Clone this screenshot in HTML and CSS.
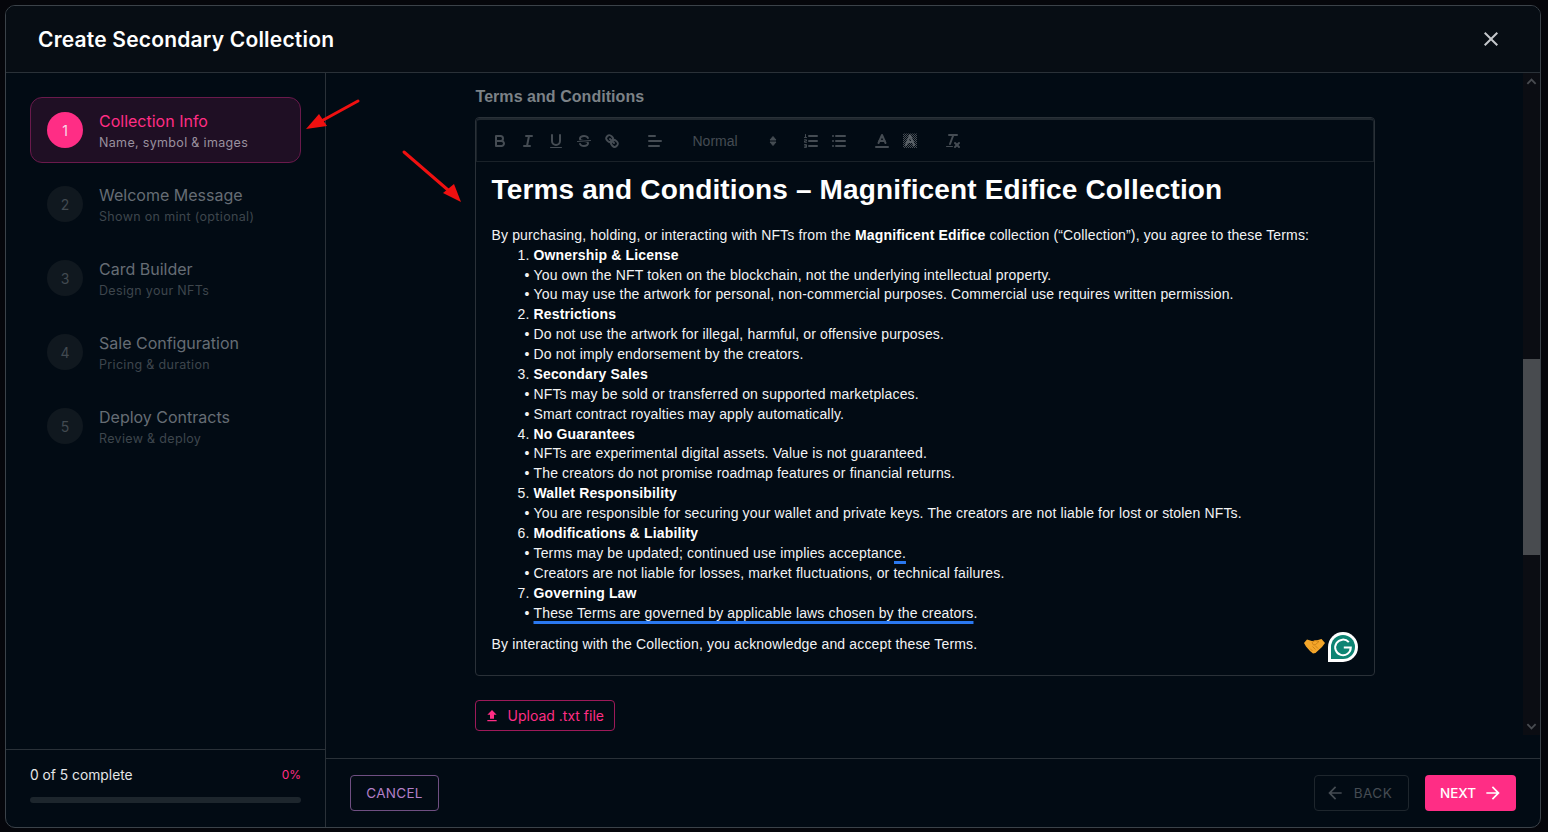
FILE: index.html
```html
<!DOCTYPE html>
<html lang="en">
<head>
<meta charset="utf-8">
<title>Create Secondary Collection</title>
<link rel="stylesheet" href="styles.css">
</head>
<body>
<div class="dialog">
  <header class="dialog-head">
    <h1 class="dialog-title">Create Secondary Collection</h1>
    <svg class="close" viewBox="0 0 24 24"><path d="M19 6.41 17.59 5 12 10.59 6.41 5 5 6.41 10.59 12 5 17.59 6.41 19 12 13.41 17.59 19 19 17.59 13.41 12z"/></svg>
  </header>
  <div class="dialog-body">
    <aside class="sidebar">
      <ol class="steps">
        <li class="step step-active"><span class="step-num">1</span><div class="step-text"><div class="step-title">Collection Info</div><div class="step-sub">Name, symbol &amp; images</div></div></li>
        <li class="step"><span class="step-num">2</span><div class="step-text"><div class="step-title">Welcome Message</div><div class="step-sub">Shown on mint (optional)</div></div></li>
        <li class="step"><span class="step-num">3</span><div class="step-text"><div class="step-title">Card Builder</div><div class="step-sub">Design your NFTs</div></div></li>
        <li class="step"><span class="step-num">4</span><div class="step-text"><div class="step-title">Sale Configuration</div><div class="step-sub">Pricing &amp; duration</div></div></li>
        <li class="step"><span class="step-num">5</span><div class="step-text"><div class="step-title">Deploy Contracts</div><div class="step-sub">Review &amp; deploy</div></div></li>
      </ol>
      <div class="progress">
        <div class="progress-row"><span>0 of 5 complete</span><span class="progress-pct">0%</span></div>
        <div class="progress-bar"></div>
      </div>
    </aside>
    <main class="main">
      <div class="scroll-row">
        <div class="content">
          <div class="content-inner">
            <div class="field-label">Terms and Conditions</div>
            <div class="editor">
              <div class="toolbar">
                <span class="tb-group">
                  <svg class="tb" viewBox="0 0 18 18"><path d="M5,4H9.5A2.5,2.5,0,0,1,12,6.5v0A2.5,2.5,0,0,1,9.5,9H5V4Z"/><path d="M5,9h5.5A2.5,2.5,0,0,1,13,11.5v0A2.5,2.5,0,0,1,10.5,14H5V9Z"/></svg>
                  <svg class="tb" viewBox="0 0 18 18"><line x1="7" x2="13" y1="4" y2="4"/><line x1="5" x2="11" y1="14" y2="14"/><line x1="8" x2="10" y1="14" y2="4"/></svg>
                  <svg class="tb" viewBox="0 0 18 18"><path d="M5,3V9a4.012,4.012,0,0,0,4,4H9a4.012,4.012,0,0,0,4-4V3"/><rect class="tb-fill" height="1" rx=".5" ry=".5" width="12" x="3" y="15"/></svg>
                  <svg class="tb" viewBox="0 0 18 18"><line class="tb-thin" x1="15.5" x2="2.5" y1="8.5" y2="9.5"/><path class="tb-fill" d="M9.007,8C6.542,7.791,6,7.519,6,6.5,6,5.792,7.283,5,9,5c1.571,0,2.765.679,2.969,1.309a1,1,0,0,0,1.9-.617C13.356,4.106,11.354,3,9,3,6.2,3,4,4.538,4,6.5a3.2,3.2,0,0,0,.5,1.843Z"/><path class="tb-fill" d="M8.984,10C11.457,10.208,12,10.479,12,11.5c0,.708-1.283,1.5-3,1.5-1.571,0-2.765-.679-2.969-1.309a1,1,0,1,0-1.9.617C4.644,13.894,6.646,15,9,15c2.8,0,5-1.538,5-3.5a3.2,3.2,0,0,0-.5-1.843Z"/></svg>
                  <svg class="tb" viewBox="0 0 18 18"><line x1="7" x2="11" y1="7" y2="11"/><path d="M8.9,4.577a3.476,3.476,0,0,1,.36,4.679A3.476,3.476,0,0,1,4.577,8.9C3.185,7.5,2.035,6.4,4.217,4.217S7.5,3.185,8.9,4.577Z"/><path d="M13.423,9.1a3.476,3.476,0,0,0-4.679-.36,3.476,3.476,0,0,0,.36,4.679c1.392,1.392,2.5,2.542,4.679.36S14.815,10.5,13.423,9.1Z"/></svg>
                </span>
                <span class="tb-group">
                  <svg class="tb" viewBox="0 0 18 18"><line x1="3" x2="15" y1="9" y2="9"/><line x1="3" x2="13" y1="14" y2="14"/><line x1="3" x2="9" y1="4" y2="4"/></svg>
                </span>
                <span class="tb-picker">Normal<svg class="tb-arrows" viewBox="0 0 18 18"><polygon points="6 10 9 13.5 12 10"/><polygon points="6 8 9 4.5 12 8"/></svg></span>
                <span class="tb-group">
                  <svg class="tb" viewBox="0 0 18 18"><line x1="7" x2="15" y1="4" y2="4"/><line x1="7" x2="15" y1="9" y2="9"/><line x1="7" x2="15" y1="14" y2="14"/><line class="tb-thin" x1="2.5" x2="4.5" y1="5.5" y2="5.5"/><line class="tb-thin" x1="3.5" x2="3.5" y1="2.5" y2="5.5"/><path class="tb-thin" d="M2.5 7.8h2v1.2h-2v1.3h2"/><path class="tb-thin" d="M2.5 12.6h2v1.4h-2 2v1.4h-2"/></svg>
                  <svg class="tb" viewBox="0 0 18 18"><line x1="6" x2="15" y1="4" y2="4"/><line x1="6" x2="15" y1="9" y2="9"/><line x1="6" x2="15" y1="14" y2="14"/><line x1="3" x2="3" y1="4" y2="4"/><line x1="3" x2="3" y1="9" y2="9"/><line x1="3" x2="3" y1="14" y2="14"/></svg>
                </span>
                <span class="tb-group">
                  <svg class="tb" viewBox="0 0 18 18"><line x1="3" x2="15" y1="15" y2="15"/><polyline points="5.5 11 9 3 12.5 11"/><line x1="11.63" x2="6.38" y1="9" y2="9"/></svg>
                  <svg class="tb tb-bg" viewBox="0 0 18 18"><defs><pattern id="dither" width="2" height="2" patternUnits="userSpaceOnUse"><rect class="tb-dot" width="1" height="1"/><rect class="tb-dot" x="1" y="1" width="1" height="1"/></pattern></defs><rect class="tb-dither" x="2" y="1.500" width="14" height="14.500" fill="url(#dither)"/><polyline points="5 13 9 3.500 13 13"/><line x1="11.9" x2="6.100" y1="10" y2="10"/></svg>
                </span>
                <span class="tb-group">
                  <svg class="tb" viewBox="0 0 18 18"><line x1="5" x2="13" y1="3" y2="3"/><line x1="6" x2="9.35" y1="12" y2="3"/><line x1="11" x2="15" y1="11" y2="15"/><line x1="15" x2="11" y1="11" y2="15"/><rect class="tb-fill" height="1" rx=".5" ry=".5" width="7" x="2" y="14"/></svg>
                </span>
              </div>
              <div class="doc">
                <h2 class="doc-title">Terms and Conditions – Magnificent Edifice Collection</h2>
                <p class="doc-p">By purchasing, holding, or interacting with NFTs from the <strong>Magnificent Edifice</strong> collection (“Collection”), you agree to these Terms:</p>
                <ol class="terms">
                  <li><strong>Ownership &amp; License</strong>
                    <ul><li>You own the NFT token on the blockchain, not the underlying intellectual property.</li><li>You may use the artwork for personal, non-commercial purposes. Commercial use requires written permission.</li></ul></li>
                  <li><strong>Restrictions</strong>
                    <ul><li>Do not use the artwork for illegal, harmful, or offensive purposes.</li><li>Do not imply endorsement by the creators.</li></ul></li>
                  <li><strong>Secondary Sales</strong>
                    <ul><li>NFTs may be sold or transferred on supported marketplaces.</li><li>Smart contract royalties may apply automatically.</li></ul></li>
                  <li><strong>No Guarantees</strong>
                    <ul><li>NFTs are experimental digital assets. Value is not guaranteed.</li><li>The creators do not promise roadmap features or financial returns.</li></ul></li>
                  <li><strong>Wallet Responsibility</strong>
                    <ul><li>You are responsible for securing your wallet and private keys. The creators are not liable for lost or stolen NFTs.</li></ul></li>
                  <li><strong>Modifications &amp; Liability</strong>
                    <ul><li>Terms may be updated; continued use implies acceptanc<span class="flag">e.</span></li><li>Creators are not liable for losses, market fluctuations, or technical failures.</li></ul></li>
                  <li><strong>Governing Law</strong>
                    <ul><li><span class="flag">These Terms are governed by applicable laws chosen by the creators</span>.</li></ul></li>
                </ol>
                <p class="doc-end">By interacting with the Collection, you acknowledge and accept these Terms.</p>
              </div>
              <div class="editor-badges">
                <svg class="handshake" viewBox="0 0 21 16"><path d="M0 5 3 1.500 8 3l6-1 3.500-1L21 5l-3 4-6.500 6-2.500.5L6 13 2 8.500z" fill="#f4a62a"/><path d="M8 4.500 11 2.500l4 1-3.500 3-2 .5zM6 10.500l2.500 2.500M8.500 8.500 11.500 11.500M11 7.500l3 3" fill="none" stroke="#c97f14" stroke-width=".9"/></svg>
                <svg class="grammarly" viewBox="0 0 30 30"><path d="M15 0a15 15 0 0 1 0 30H0V15A15 15 0 0 1 15 0z" fill="#fff"/><path d="M15 3a12 12 0 0 1 0 24H3V15A12 12 0 0 1 15 3z" fill="#0d8473"/><path d="M20.800 10.200a7.800 7.800 0 1 0 2 5.300h-7" fill="none" stroke="#fff" stroke-width="2"/></svg>
              </div>
            </div>
            <button class="upload" type="button"><svg class="upload-icon" viewBox="0 0 24 24"><path d="M5 20h14v-2H5zm0-10h4v6h6v-6h4l-7-7z"/></svg>Upload .txt file</button>
          </div>
        </div>
        <div class="scrollbar">
          <svg class="sb-arrow" viewBox="0 0 12 8"><path d="M1.5 6.500 6 2l4.500 4.500"/></svg>
          <div class="sb-track"><div class="sb-thumb"></div></div>
          <svg class="sb-arrow" viewBox="0 0 12 8"><path d="M1.500 1.500 6 6l4.500-4.500"/></svg>
        </div>
      </div>
      <footer class="foot">
        <button class="btn btn-cancel" type="button">CANCEL</button>
        <div class="foot-right">
          <button class="btn btn-back" type="button"><svg class="btn-icon" viewBox="0 0 24 24"><path d="M20 11H7.830l5.590-5.590L12 4l-8 8 8 8 1.410-1.410L7.830 13H20z"/></svg>BACK</button>
          <button class="btn btn-next" type="button">NEXT<svg class="btn-icon" viewBox="0 0 24 24"><path d="m12 4-1.410 1.410L16.170 11H4v2h12.170l-5.580 5.590L12 20l8-8z"/></svg></button>
        </div>
      </footer>
    </main>
  </div>
</div>
<svg class="annot annot-one" viewBox="0 0 54 32"><path d="M52 2 10 25" class="annot-line"/><path d="M0 30 13 15l8 12z" class="annot-head"/></svg>
<svg class="annot annot-two" viewBox="0 0 60 54"><path d="M2 2 46 40" class="annot-line"/><path d="M59 52 52 34 41 43z" class="annot-head"/></svg>
</body>
</html>
```
FILE: styles.css
```css
* { box-sizing: border-box; }
html, body { margin: 0; height: 100%; }
body {
  position: relative;
  width: 1548px;
  height: 832px;
  overflow: hidden;
  padding: 5px 7px 4px 5px;
  background: #05060b;
  font-family: Inter, "Open Sans", sans-serif;
  color: #fff;
}
.dialog {
  display: flex;
  flex-direction: column;
  height: 100%;
  border: 1px solid #3b4249;
  border-radius: 10px;
  overflow: hidden;
  background: #020b14;
}
.dialog-head {
  display: flex;
  align-items: center;
  justify-content: space-between;
  height: 67px;
  flex: none;
  padding: 0 37px 0 32px;
  background: #070d14;
  border-bottom: 1px solid #2a3138;
}
.dialog-title { margin: 0; font-size: 21px; font-weight: 600; letter-spacing: 0.2px; }
.close { width: 24px; height: 24px; fill: #c4c7cb; }
.dialog-body { display: flex; flex: 1; min-height: 0; }

.sidebar {
  display: flex;
  flex-direction: column;
  width: 320px;
  flex: none;
  border-right: 1px solid #2a3138;
}
.steps {
  flex: 1;
  display: flex;
  flex-direction: column;
  gap: 8px;
  margin: 0;
  padding: 24px 24px 0;
  list-style: none;
}
.step {
  display: flex;
  align-items: center;
  gap: 16px;
  height: 66px;
  padding: 0 16px;
  border: 1px solid transparent;
  border-radius: 12px;
}
.step-active { background: #1f0f24; border-color: #6a1a4c; }
.step-num {
  display: flex;
  align-items: center;
  justify-content: center;
  width: 36px;
  height: 36px;
  flex: none;
  border-radius: 50%;
  background: #10181f;
  color: #424a51;
  font-size: 14px;
}
.step-active .step-num { background: #ff2d85; color: #f8dbe8; }
.step-text { padding-top: 3px; }
.step-title { font-size: 16px; line-height: 22px; margin-bottom: 1px; color: #666d74; }
.step-sub { font-size: 12.5px; line-height: 20px; letter-spacing: 0.33px; color: #3e464d; }
.step-active .step-title { color: #ff2d85; }
.step-active .step-sub { color: #9a919f; }
.progress {
  height: 78px;
  flex: none;
  padding: 15px 24px 0;
  border-top: 1px solid #2a3138;
}
.progress-row {
  display: flex;
  justify-content: space-between;
  font-size: 13.8px;
  line-height: 20px;
  color: #e4e6e8;
}
.progress-pct { font-size: 12px; color: #ff2d85; }
.progress-bar { height: 6px; margin-top: 12px; border-radius: 3px; background: #1d262d; }

.main { display: flex; flex-direction: column; flex: 1; min-width: 0; }
.scroll-row { display: flex; height: 662px; flex: none; }
.content { flex: 1; min-width: 0; }
.content-inner { width: 900px; margin: 0 auto; padding-top: 13px; }
.field-label {
  font-family: "Liberation Sans", Arial, sans-serif;
  font-size: 16px;
  font-weight: 700;
  line-height: 21px;
  letter-spacing: 0.05px;
  padding-left: 1px;
  color: #7c8287;
  margin-bottom: 10px;
}
.editor {
  position: relative;
  height: 559px;
  border: 1px solid #2a3138;
  border-radius: 4px;
  font-family: "Liberation Sans", Arial, sans-serif;
}
.toolbar {
  display: flex;
  align-items: center;
  height: 44px;
  padding: 0 0 0 9px;
  border-bottom: 1px solid #1a2229;
  border-top: 2px solid #20282f;
  border-left: 1px solid #1a2229;
  border-right: 1px solid #1a2229;
  border-top-left-radius: 4px;
  border-top-right-radius: 4px;
}
.tb-group { display: flex; margin-right: 15px; }
.tb {
  width: 28px;
  height: 24px;
  padding: 3px 5px;
  fill: none;
  stroke: #454c53;
  stroke-width: 2;
  stroke-linecap: round;
  stroke-linejoin: round;
}
.tb .tb-fill { fill: #454c53; stroke: none; }
.tb .tb-thin { stroke-width: 1; }
.tb .tb-dither { stroke: none; }
.tb .tb-dot { fill: #454c53; stroke: none; }
.tb-bg { stroke: #5a6167; }
.tb-picker {
  display: flex;
  align-items: center;
  justify-content: space-between;
  width: 97px;
  height: 24px;
  margin: 0 15px 0 1px;
  padding-left: 8px;
  font-size: 14px;
  color: #454c53;
}
.tb-arrows { width: 18px; height: 18px; fill: #454c53; stroke: #454c53; stroke-linejoin: round; }
.doc { padding: 8px 16px 0; font-size: 14px; line-height: 19.88px; letter-spacing: 0.15px; color: #f2f3f4; }
.doc-title { margin: 0 0 16px; font-size: 28px; font-weight: 700; line-height: 39.8px; color: #fff; }
.doc-p { margin: 0; }
.doc strong { color: #fff; }
.terms { margin: 0; padding-left: 42px; }
.terms ul { margin: 0; padding: 0; list-style-type: "• "; }
.terms > li:last-child ul { margin-top: 0.25px; }
.flag {
  text-decoration: underline #2a78f0 3px;
  text-underline-offset: 3px;
  text-decoration-skip-ink: none;
}
.doc-end { margin: 11px 0 0; }
.editor-badges {
  position: absolute;
  right: 16px;
  bottom: 13px;
  display: flex;
  align-items: flex-start;
  gap: 3px;
}
.handshake { width: 21px; height: 16px; margin-top: 6px; }
.grammarly { width: 30px; height: 30px; }
.upload {
  display: flex;
  align-items: center;
  gap: 8px;
  width: 140px;
  height: 31px;
  margin-top: 24px;
  padding: 0 0 0 8px;
  background: transparent;
  border: 1px solid #9d1a59;
  border-radius: 4px;
  color: #ff2d85;
  font-family: inherit;
  font-size: 14px;
}
.upload-icon { width: 16px; height: 16px; flex: none; fill: #ff2d85; }
.scrollbar {
  display: flex;
  flex-direction: column;
  align-items: center;
  width: 17px;
  flex: none;
  background: #0b0d13;
}
.sb-arrow { width: 17px; height: 17px; padding: 4px 3px; flex: none; fill: none; stroke: #484b50; stroke-width: 2; }
.sb-track { flex: 1; width: 100%; padding-top: 269px; }
.sb-thumb { height: 196px; background: #484b4f; }
.foot {
  display: flex;
  align-items: center;
  justify-content: space-between;
  flex: 1;
  margin-top: 23px;
  padding: 0 24px;
  border-top: 1px solid #2a3138;
}
.foot-right { display: flex; gap: 16px; }
.btn {
  display: flex;
  align-items: center;
  justify-content: center;
  height: 36px;
  border-radius: 4px;
  background: transparent;
  border: 1px solid transparent;
  font-family: inherit;
  font-size: 13.5px;
  letter-spacing: 0.3px;
}
.btn-cancel { width: 89px; border-color: #6f4f82; color: #b27fc8; }
.btn-back { width: 95px; gap: 9px; padding-right: 12px; border-color: #1e262d; color: #454c53; letter-spacing: 0.5px; }
.btn-back .btn-icon { fill: #454c53; }
.btn-next { width: 91px; gap: 7px; padding-left: 8px; background: #ff2d85; color: #fff; font-weight: 500; letter-spacing: 0; }
.btn-next .btn-icon { fill: #fff; }
.btn-icon { width: 20px; height: 20px; flex: none; }

.annot { position: absolute; overflow: visible; }
.annot-one { left: 306px; top: 99px; width: 54px; height: 32px; }
.annot-two { left: 402px; top: 150px; width: 60px; height: 54px; }
.annot-line { fill: none; stroke: #f01010; stroke-width: 3; stroke-linecap: round; }
.annot-head { fill: #f01010; }
```
